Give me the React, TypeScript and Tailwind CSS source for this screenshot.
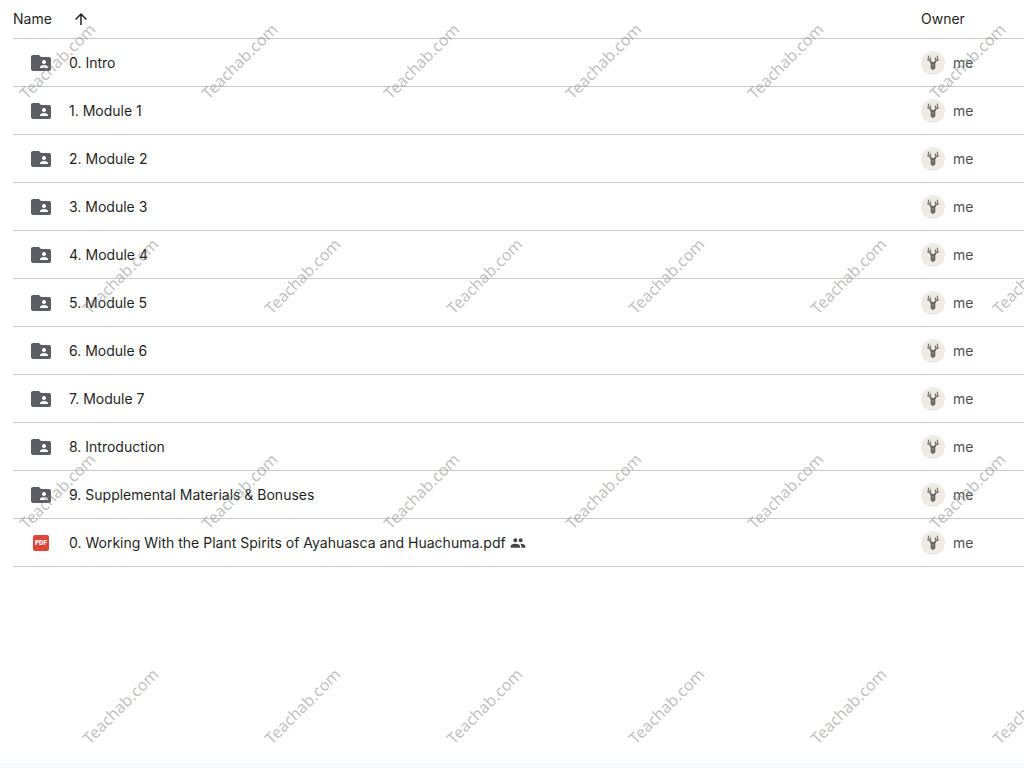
import { MdArrowUpward, MdFolderShared, MdPeople } from "react-icons/md";

type Item = {
  name: string;
  kind: "folder" | "pdf";
  shared?: boolean;
};

const items: Item[] = [
  { name: "0. Intro", kind: "folder" },
  { name: "1. Module 1", kind: "folder" },
  { name: "2. Module 2", kind: "folder" },
  { name: "3. Module 3", kind: "folder" },
  { name: "4. Module 4", kind: "folder" },
  { name: "5. Module 5", kind: "folder" },
  { name: "6. Module 6", kind: "folder" },
  { name: "7. Module 7", kind: "folder" },
  { name: "8. Introduction", kind: "folder" },
  { name: "9. Supplemental Materials & Bonuses", kind: "folder" },
  {
    name: "0. Working With the Plant Spirits of Ayahuasca and Huachuma.pdf",
    kind: "pdf",
    shared: true,
  },
];

function PdfIcon() {
  return (
    <span className="mx-1 flex size-4 shrink-0 items-center justify-center rounded-xs bg-[#e0443a] text-[6px] leading-none font-black text-white">
      PDF
    </span>
  );
}

function DeerAvatar() {
  return (
    <svg viewBox="0 0 24 24" className="size-6 shrink-0" aria-hidden="true">
      <circle cx="12" cy="12" r="12" fill="#efebe4" />
      {/* antlers */}
      <g fill="none" stroke="#7a746f" strokeWidth="1.2" strokeLinecap="round">
        <path d="M11.2 11.8 L9 9.6 L7.2 7.8 L7.8 5.2" />
        <path d="M9 9.6 L6.6 9" />
        <path d="M9.2 9.2 L9.8 6.8" />
        <path d="M12.8 11.8 L15 9.6 L16.8 7.8 L16.2 5.2" />
        <path d="M15 9.6 L17.4 9" />
        <path d="M14.8 9.2 L14.2 6.8" />
      </g>
      {/* head */}
      <path d="M8.2 10 L12 11.2 L15.8 10 L14.2 12.8 L14.4 17 L13 18.8 H11 L9.6 17 L9.8 12.8 Z" fill="#6b6561" />
      <path d="M11 13.6 H13 M11 15.4 H13 M11.2 17 H12.8" stroke="#aaa49e" strokeWidth="0.5" />
    </svg>
  );
}

function Row({ item }: { item: Item }) {
  return (
    <tr className="h-12">
      <td className="border-b border-[#c7c7c7] p-0">
        <div className="flex items-center pl-4">
          {item.kind === "folder" ? (
            <MdFolderShared className="size-6 shrink-0 text-[#5c5d64]" />
          ) : (
            <PdfIcon />
          )}
          <span className="ml-4 text-[#1f1f1f]">{item.name}</span>
          {item.shared && <MdPeople className="ml-1 size-4 shrink-0 text-[#444746]" />}
        </div>
      </td>
      <td className="border-b border-[#c7c7c7] p-0">
        <div className="flex items-center gap-2 text-[#505352]">
          <DeerAvatar />
          me
        </div>
      </td>
    </tr>
  );
}

function WatermarkRow({ className }: { className: string }) {
  return (
    <div className={`flex h-[215px] shrink-0 ${className}`}>
      {Array.from({ length: 6 }, (_, i) => (
        <div key={i} className="flex w-[182px] shrink-0 items-center justify-center">
          <span className="-rotate-45">Teachab.com</span>
        </div>
      ))}
    </div>
  );
}

function Watermark() {
  return (
    <div
      aria-hidden="true"
      className="pointer-events-none absolute inset-0 overflow-hidden font-['Noto_Sans',sans-serif] text-base text-[#808080]/50 select-none"
    >
      <div className="-mt-[47px]">
        <WatermarkRow className="-ml-[34px]" />
        <WatermarkRow className="ml-[29px]" />
        <WatermarkRow className="-ml-[34px]" />
        <WatermarkRow className="ml-[29px]" />
      </div>
    </div>
  );
}

export default function App() {
  return (
    <div className="relative flex min-h-screen flex-col bg-white font-[Inter,sans-serif] text-sm">
      <main className="flex-1 pl-[13px]">
        <table className="w-full table-fixed border-separate border-spacing-0 text-left">
          <thead>
            <tr className="h-[39px] text-[#1f1f1f]">
              <th className="border-b border-[#c7c7c7] p-0 font-normal">
                <button type="button" className="flex items-center gap-5">
                  Name
                  <MdArrowUpward className="size-[18px]" />
                </button>
              </th>
              <th className="w-[103px] border-b border-[#c7c7c7] p-0 font-normal">Owner</th>
            </tr>
          </thead>
          <tbody>
            {items.map((item) => (
              <Row key={item.name} item={item} />
            ))}
          </tbody>
        </table>
      </main>
      <div className="h-[5px] bg-[#f8f9fc]" />
      <Watermark />
    </div>
  );
}
